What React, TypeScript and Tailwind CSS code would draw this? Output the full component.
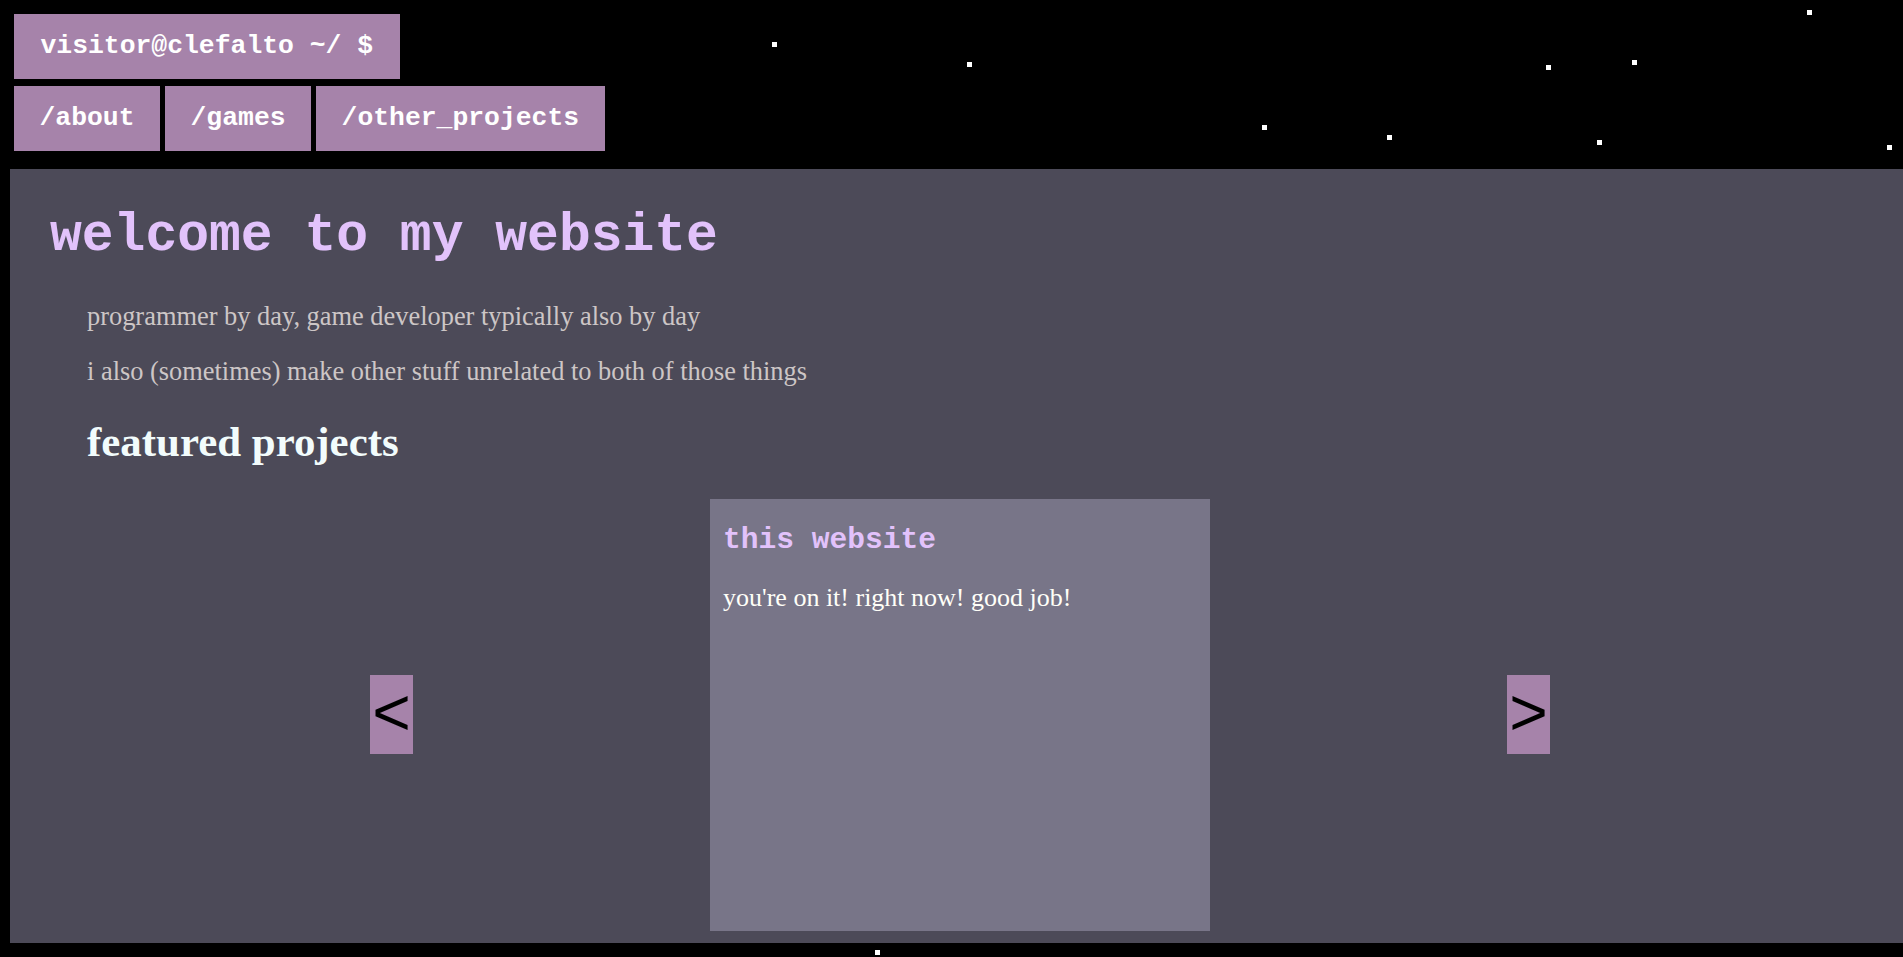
const stars = [
  { x: 772, y: 42 },
  { x: 967, y: 62 },
  { x: 1807, y: 10 },
  { x: 1546, y: 65 },
  { x: 1632, y: 60 },
  { x: 1262, y: 125 },
  { x: 1387, y: 135 },
  { x: 1597, y: 140 },
  { x: 1887, y: 145 },
  { x: 875, y: 950 },
];

const navLinks = ['/about', '/games', '/other_projects'];

const ArrowButton = ({ label }: { label: string }) => (
  <button className="flex h-[79px] w-[43px] items-center justify-center bg-[#a683aa] font-['Liberation_Sans',Arial,sans-serif] text-[66px] leading-none text-black">
    <span className="-mt-[6px]">{label}</span>
  </button>
);

export default function App() {
  return (
    <div className="relative min-h-[957px] overflow-hidden bg-black">
      {/* terminal-ish header */}
      <header className="pl-[14px] pt-[14px] font-['Liberation_Mono','Courier_New',monospace] text-[26.4px] font-bold text-white">
        <div className="flex">
          <a className="flex h-[65px] items-center bg-[#a683aa] px-[26.5px]">visitor@clefalto ~/ $</a>
        </div>
        <nav className="mt-[7px] flex gap-[5px]">
          {navLinks.map((link) => (
            <a key={link} className="flex h-[65px] items-center bg-[#a683aa] px-[25.5px]">
              {link}
            </a>
          ))}
        </nav>
      </header>

      <main className="ml-[10px] mt-[18px] w-[1900px] bg-[#4c4a58] px-[40px] pb-[12px] pt-[41px]">
        <h1 className="font-['Liberation_Mono','Courier_New',monospace] text-[53px] font-bold leading-none text-[#e2c2fb]">
          welcome to my website
        </h1>

        <div className="ml-[37px] font-['Liberation_Serif','Times_New_Roman',serif]">
          <p className="mt-[38px] text-[26.4px] leading-[1.15] text-[#cdc6c6]">
            programmer by day, game developer typically also by day
          </p>
          <p className="mt-[24.5px] text-[26.4px] leading-[1.15] text-[#cdc6c6]">
            i also (sometimes) make other stuff unrelated to both of those things
          </p>
          <h2 className="mt-[29.5px] text-[42.9px] font-bold leading-[1.2] text-[#f2fcfc]">featured projects</h2>
        </div>

        {/* project carousel */}
        <div className="mt-[31.5px] flex items-center justify-center gap-[297px]">
          <ArrowButton label="<" />
          <div className="h-[432px] w-[500px] bg-[#787588] px-[13px] pt-[27.5px]">
            <h3 className="font-['Liberation_Mono','Courier_New',monospace] text-[29.6px] font-bold leading-none text-[#e2c2fb]">
              this website
            </h3>
            <p className="mt-[27.5px] font-['Liberation_Serif','Times_New_Roman',serif] text-[26px] leading-[1.15] text-[#fffff8]">
              you're on it! right now! good job!
            </p>
          </div>
          <ArrowButton label=">" />
        </div>
      </main>

      {stars.map((s, i) => (
        <div
          key={i}
          className="absolute h-[5px] w-[5px] bg-white"
          style={{ left: s.x, top: s.y }}
        />
      ))}
    </div>
  );
}
